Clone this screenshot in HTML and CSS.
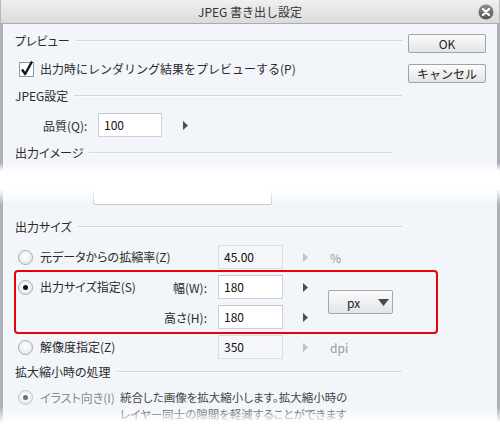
FILE: index.html
```html
<!DOCTYPE html>
<html lang="ja">
<head>
<meta charset="utf-8">
<title>JPEG 書き出し設定</title>
<link rel="stylesheet" href="styles.css">
</head>
<body>
<div class="window">
  <header class="titlebar">
    <span class="title">JPEG 書き出し設定</span>
    <svg class="close" width="16" height="16" viewBox="0 0 16 16" aria-label="閉じる">
      <defs>
        <linearGradient id="cg" x1="0" y1="0" x2="0" y2="1">
          <stop offset="0" stop-color="#8c8c8c"/>
          <stop offset="1" stop-color="#555"/>
        </linearGradient>
      </defs>
      <circle cx="8" cy="8" r="7.5" fill="url(#cg)"/>
      <path d="M5 5 L11 11 M11 5 L5 11" stroke="#fff" stroke-width="2.4" stroke-linecap="round"/>
    </svg>
  </header>
  <div class="body">
    <div class="main">
      <div class="group-head"><span>プレビュー</span><i class="rule"></i></div>
      <div class="check-row">
        <svg class="checkbox" width="15" height="18" viewBox="0 0 15 18">
          <rect x="0.5" y="3.5" width="14" height="14" fill="#fff" stroke="#8d9aab"/>
          <path d="M3 10.5 L6.2 15 L13 2.5" fill="none" stroke="#111" stroke-width="2.3" stroke-linejoin="round"/>
        </svg>
        <span class="check-label">出力時にレンダリング結果をプレビューする(P)</span>
      </div>

      <div class="group-head gh-jpeg"><span>JPEG設定</span><i class="rule"></i></div>
      <div class="quality-row">
        <span class="q-label">品質(Q):</span>
        <span class="field q-field">100</span>
        <svg class="spin" width="5" height="9" viewBox="0 0 5 9"><polygon points="0,0 5,4.5 0,9" fill="#4d4d4d"/></svg>
      </div>

      <div class="group-head gh-image"><span>出力イメージ</span><i class="rule short"></i></div>
      <div class="hidden-row"><span class="field wide"></span></div>

      <div class="group-head gh-size"><span>出力サイズ</span><i class="rule"></i></div>
      <div class="size-grid">
        <div class="opt"><span class="radio"></span>元データからの拡縮率(Z)</div>
        <span></span>
        <span class="field disabled">45.00</span>
        <svg class="spin" width="5" height="9" viewBox="0 0 5 9"><polygon points="0,0 5,4.5 0,9" fill="#bfc3c8"/></svg>
        <span class="unit">%</span>

        <div class="opt"><span class="radio checked"></span>出力サイズ指定(S)</div>
        <span class="f-label">幅(W):</span>
        <span class="field">180</span>
        <svg class="spin" width="5" height="9" viewBox="0 0 5 9"><polygon points="0,0 5,4.5 0,9" fill="#4d4d4d"/></svg>
        <div class="dropdown"><span>px</span>
          <svg width="11" height="7" viewBox="0 0 11 7"><polygon points="0,0 11,0 5.5,7" fill="#4a4a4a"/></svg>
        </div>

        <span></span>
        <span class="f-label">高さ(H):</span>
        <span class="field">180</span>
        <svg class="spin" width="5" height="9" viewBox="0 0 5 9"><polygon points="0,0 5,4.5 0,9" fill="#4d4d4d"/></svg>

        <div class="opt"><span class="radio"></span>解像度指定(Z)</div>
        <span></span>
        <span class="field disabled">350</span>
        <svg class="spin" width="5" height="9" viewBox="0 0 5 9"><polygon points="0,0 5,4.5 0,9" fill="#bfc3c8"/></svg>
        <span class="unit">dpi</span>
      </div>

      <div class="group-head gh-scale"><span>拡大縮小時の処理</span><i class="rule"></i></div>
      <div class="scale-row">
        <div class="opt disabled"><span class="radio checked"></span>イラスト向き(I)</div>
        <p class="desc">統合した画像を拡大縮小します。拡大縮小時の<br>レイヤー同士の隙間を軽減することができます</p>
      </div>
    </div>

    <div class="buttons">
      <button class="btn">OK</button>
      <button class="btn">キャンセル</button>
    </div>

    <div class="highlight"></div>
    <div class="fade fade-mid"></div>
    <div class="fade fade-bottom"></div>
  </div>
</div>
</body>
</html>
```

FILE: styles.css
```css
body {
  margin: 0;
  font-family: "Noto Sans CJK JP", "Noto Sans", sans-serif;
  font-size: 12px;
  color: #2b2b2b;
  background: #fff;
  font-feature-settings: "palt";
}

.window {
  width: 500px;
  height: 436px;
  display: flex;
  flex-direction: column;
  overflow: hidden;
}

.titlebar {
  flex: none;
  height: 23px;
  position: relative;
  display: flex;
  align-items: center;
  justify-content: center;
  background: linear-gradient(#f0f0f0, #dadada);
  border-bottom: 1px solid #a9abae;
  border-left: 1px solid #b9b9b9;
  border-right: 1px solid #b9b9b9;
}

.title {
  font-size: 12px;
  line-height: 16px;
  color: #333;
  font-feature-settings: normal;
}

.close {
  position: absolute;
  right: 5px;
  top: 4px;
}

.body {
  flex: 1;
  position: relative;
  display: grid;
  grid-template-columns: 387px 78px;
  column-gap: 6px;
  align-items: start;
  padding-left: 12px;
  border-left: 3px solid #adb1b6;
  border-right: 3px solid #adb1b6;
  background: #f2f5f9;
}

.main {
  padding-top: 9px;
}

.group-head {
  display: flex;
  align-items: center;
  height: 16px;
  line-height: 16px;
  color: #2b2b2b;
}

.rule {
  flex: 1;
  height: 0;
  margin-left: 6px;
  border-top: 1px solid #d3d7dc;
  border-bottom: 1px solid #fbfcfd;
}

.rule.short {
  margin-right: 10px;
}

.check-row {
  display: flex;
  align-items: center;
  height: 16px;
  margin-top: 12px;
  padding-left: 4px;
}

.checkbox {
  flex: none;
  margin-right: 6px;
  margin-top: -3px;
}

.check-label {
  font-feature-settings: normal;
  line-height: 16px;
}

.gh-jpeg { margin-top: 11px; }
.gh-image { margin-top: 8px; }
.gh-size { margin-top: 14px; }
.gh-scale { margin-top: 5px; }

.quality-row {
  display: flex;
  align-items: center;
  height: 24px;
  margin-top: 9px;
  padding-left: 28px;
}

.q-label {
  width: 55px;
}

.field {
  box-sizing: border-box;
  display: block;
  width: 65px;
  height: 24px;
  padding: 0 5px;
  line-height: 22px;
  border: 1px solid #cdd1d6;
  border-top-color: #c3c7cd;
  background: #fff;
  color: #111;
  font-size: 12px;
}

.q-field {
  width: 64px;
}

.field.disabled {
  background: #f4f6f9;
  border-color: #dadde2;
}

.quality-row .spin {
  margin-left: 21px;
}

.hidden-row {
  margin-top: 20px;
  padding-left: 78px;
}

.field.wide {
  width: 179px;
  border-radius: 2px;
  border-color: #c4c8ce;
}

.size-grid {
  display: grid;
  grid-template-columns: 135px 68px 65px 46px 65px;
  grid-auto-rows: 24px;
  row-gap: 6px;
  align-items: center;
  margin-top: 10px;
}

.opt {
  display: flex;
  align-items: center;
  gap: 7px;
  padding-left: 3px;
  height: 16px;
  line-height: 16px;
  white-space: nowrap;
}

.opt.disabled {
  color: #8a8a8a;
}

.radio {
  flex: none;
  box-sizing: border-box;
  width: 15px;
  height: 15px;
  border-radius: 50%;
  border: 1px solid #a7abb1;
  background: radial-gradient(circle at 50% 40%, #fff 0, #f4f5f6 40%, #dcdfe3 100%);
  display: flex;
  align-items: center;
  justify-content: center;
}

.radio.checked::after {
  content: "";
  width: 5px;
  height: 5px;
  border-radius: 50%;
  background: #111;
}

.opt.disabled .radio {
  border-color: #c2c5ca;
}

.opt.disabled .radio.checked::after {
  background: #707070;
}

.f-label {
  text-align: right;
  padding-right: 11px;
  white-space: nowrap;
}

.size-grid .spin {
  margin-left: 20px;
}

.unit {
  color: #9a9a9a;
  padding-left: 1px;
}

.dropdown {
  grid-column: 5;
  grid-row: 2 / span 2;
  align-self: center;
  box-sizing: border-box;
  width: 65px;
  height: 24px;
  margin-left: -1px;
  display: flex;
  align-items: center;
  justify-content: space-between;
  padding: 0 3px 0 18px;
  border: 1px solid #a3a7ad;
  border-radius: 2px;
  background: linear-gradient(#fbfbfb, #e3e5e8);
  color: #222;
}

.scale-row {
  display: flex;
  align-items: flex-start;
  margin-top: 9px;
}

.scale-row .opt {
  width: 102px;
  height: 17px;
  line-height: 17px;
  flex: none;
}

.desc {
  margin: 0;
  font-size: 11.5px;
  line-height: 17px;
  color: #454545;
  white-space: nowrap;
}

.buttons {
  display: flex;
  flex-direction: column;
  gap: 11px;
  padding-top: 10px;
}

.btn {
  box-sizing: border-box;
  width: 78px;
  height: 19px;
  padding: 0;
  border: 1px solid #9ea3a9;
  border-radius: 2px;
  background: linear-gradient(#fcfcfc, #e1e3e6);
  font-family: inherit;
  font-size: 12px;
  line-height: 16px;
  color: #222;
}

.highlight {
  position: absolute;
  left: 11px;
  top: 246px;
  box-sizing: border-box;
  width: 424px;
  height: 64px;
  border: 2px solid #e8000b;
  border-radius: 4px;
}

.fade {
  position: absolute;
  left: -3px;
  right: -3px;
}

.fade-mid {
  top: 139px;
  height: 42px;
  background: linear-gradient(rgba(255,255,255,0) 0, #fff 8px, #fff 26px, rgba(255,255,255,0) 100%);
}

.fade-bottom {
  top: 383px;
  bottom: 0;
  background: linear-gradient(rgba(255,255,255,0) 0, #fff 16px, #fff 100%);
}
```
